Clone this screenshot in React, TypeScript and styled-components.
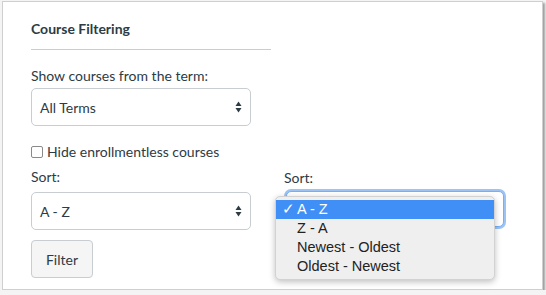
import { FC } from 'react'
import styled, { createGlobalStyle } from 'styled-components'

const GlobalStyle = createGlobalStyle`
  html, body {
    margin: 0;
    padding: 0;
    background: #f4f4f4;
  }
  body {
    font-family: Lato, 'Liberation Sans', sans-serif;
    color: #2d3b45;
  }
`

const Frame = styled.div`
  box-sizing: border-box;
  width: 541px;
  height: 289px;
  margin: 1px 0 0 2px;
  background: #fff;
  border: 1px solid #cfcfcf;
  box-shadow: 2px 2px 2px rgba(0, 0, 0, 0.35);
  display: flex;
  padding: 17px 0 0 28px;
`

const LeftCol = styled.div`
  width: 240px;
`

const RightCol = styled.div`
  position: relative;
  margin-left: 13px;
  padding-top: 149px;
  width: 222px;
`

const Title = styled.div`
  font-size: 14px;
  font-weight: 700;
  line-height: 20px;
`

const Rule = styled.hr`
  margin: 10px 0 0;
  border: none;
  border-top: 1px solid #c7cdd1;
  height: 0;
`

const Label = styled.div<{ $top: number }>`
  margin-top: ${p => p.$top}px;
  font-size: 14px;
  line-height: 20px;
`

const Select = styled.div<{ $top: number; $focused?: boolean }>`
  box-sizing: border-box;
  margin-top: ${p => p.$top}px;
  width: ${p => (p.$focused ? '218px' : '220px')};
  height: ${p => (p.$focused ? '36px' : '38px')};
  margin-left: ${p => (p.$focused ? '2px' : '0')};
  border: 1px solid ${p => (p.$focused ? '#7aaef2' : '#c7cdd1')};
  border-radius: 5px;
  background: #fff;
  box-shadow: ${p => (p.$focused ? '0 0 0 2px #9cc3f5' : 'none')};
  display: flex;
  align-items: center;
  justify-content: space-between;
  padding: 0 8px 0 8px;
  font-size: 14px;
`

const Arrows: FC = () => (
  <svg width="7" height="12" viewBox="0 0 7 12">
    <path d="M3.5 0.5 L6.5 5 L0.5 5 Z" fill="#2d3b45" />
    <path d="M3.5 11.5 L6.5 7 L0.5 7 Z" fill="#2d3b45" />
  </svg>
)

const CheckRow = styled.label`
  margin-top: 16px;
  display: flex;
  align-items: center;
  font-size: 14px;
  line-height: 20px;
`

const Box = styled.span`
  box-sizing: border-box;
  width: 12px;
  height: 12px;
  border: 1px solid #8a8a8a;
  border-radius: 2px;
  margin-right: 4px;
  background: #fff;
`

const Button = styled.button`
  box-sizing: border-box;
  margin-top: 10px;
  width: 62px;
  height: 38px;
  background: #f5f5f5;
  border: 1px solid #c7cdd1;
  border-radius: 4px;
  font-family: Lato, 'Liberation Sans', sans-serif;
  font-size: 14px;
  color: #2d3b45;
  padding: 0;
`

const Menu = styled.ul`
  position: absolute;
  left: -9px;
  top: 177px;
  width: 220px;
  margin: 0;
  padding: 3px 0 3px;
  list-style: none;
  background: #efefef;
  border: 1px solid #d2d2d2;
  border-radius: 5px;
  box-shadow: 0 2px 6px rgba(0, 0, 0, 0.25);
  box-sizing: border-box;
  font-family: 'Liberation Sans', Arial, sans-serif;
  font-size: 14.5px;
`

const Item = styled.li<{ $active?: boolean }>`
  position: relative;
  height: 19px;
  line-height: 19px;
  padding-left: 21px;
  color: ${p => (p.$active ? '#fff' : '#222')};
  background: ${p => (p.$active ? '#3f8ff7' : 'transparent')};
`

const Check = styled.span`
  position: absolute;
  left: 6px;
  top: 0;
`

const sortOptions = ['A - Z', 'Z - A', 'Newest - Oldest', 'Oldest - Newest']

const App: FC = () => (
  <>
    <GlobalStyle />
    <Frame>
      <LeftCol>
        <Title>Course Filtering</Title>
        <Rule />
        <Label $top={16}>Show courses from the term:</Label>
        <Select $top={2}>
          <span>All Terms</span>
          <Arrows />
        </Select>
        <CheckRow>
          <Box />
          Hide enrollmentless courses
        </CheckRow>
        <Label $top={5}>Sort:</Label>
        <Select $top={5}>
          <span>A - Z</span>
          <Arrows />
        </Select>
        <Button>Filter</Button>
      </LeftCol>
      <RightCol>
        <Label $top={0}>Sort:</Label>
        <Select $top={3} $focused>
          <span />
          <Arrows />
        </Select>
        <Menu>
          {sortOptions.map((o, i) => (
            <Item key={o} $active={i === 0}>
              {i === 0 && <Check>✓</Check>}
              {o}
            </Item>
          ))}
        </Menu>
      </RightCol>
    </Frame>
  </>
)

export default App
